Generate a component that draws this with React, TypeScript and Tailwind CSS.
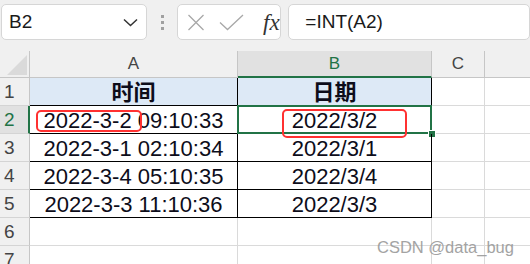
import React from 'react';

interface Row {
  n: number;
  a: string;
  b: string;
}

const rows: Row[] = [
  { n: 1, a: '时间', b: '日期' },
  { n: 2, a: '2022-3-2 09:10:33', b: '2022/3/2' },
  { n: 3, a: '2022-3-1 02:10:34', b: '2022/3/1' },
  { n: 4, a: '2022-3-4 05:10:35', b: '2022/3/4' },
  { n: 5, a: '2022-3-3 11:10:36', b: '2022/3/3' },
  { n: 6, a: '', b: '' },
  { n: 7, a: '', b: '' },
];

const ui = { fontFamily: '"Liberation Sans", "Noto Sans CJK SC", sans-serif' };

const App: React.FC = () => {
  return (
    <div className="relative w-[530px] h-[264px] overflow-hidden bg-white" style={ui}>
      {/* Formula bar */}
      <div className="flex items-start h-[51px] pt-[4px] bg-[#f0f0f0]">
        <div className="ml-[1px] w-[151px] h-[36px] flex items-center justify-between pl-[7px] pr-[8px] bg-white border border-[#d6d6d6] rounded-[5px]">
          <span className="text-[19px] text-[#1a1a1a]">B2</span>
          <svg width="15" height="9" viewBox="0 0 15 9">
            <path d="M1 1.5 L7.5 7.5 L14 1.5" fill="none" stroke="#333" strokeWidth="1.5" />
          </svg>
        </div>
        <div className="w-[31px] h-[36px] flex flex-col items-center justify-center gap-[3px]">
          <span className="w-[3px] h-[3px] bg-[#a0a0a0]" />
          <span className="w-[3px] h-[3px] bg-[#a0a0a0]" />
          <span className="w-[3px] h-[3px] bg-[#a0a0a0]" />
        </div>
        <div className="w-[108px] h-[36px] flex items-center bg-white border border-[#d6d6d6] rounded-[5px]">
          <svg className="ml-[9px]" width="18" height="17" viewBox="0 0 18 17">
            <path d="M1.5 1 L16.5 16 M16.5 1 L1.5 16" stroke="#a8a8a8" strokeWidth="1.3" />
          </svg>
          <svg className="ml-[14px]" width="25" height="17" viewBox="0 0 25 17">
            <path d="M1 8.5 L8.5 15.5 L24 1" fill="none" stroke="#a8a8a8" strokeWidth="1.3" />
          </svg>
          <span
            className="ml-[19px] text-[23px] italic text-[#333] leading-none"
            style={{ fontFamily: '"Liberation Serif", serif' }}
          >
            fx
          </span>
        </div>
        <div className="ml-[7px] w-[250px] h-[36px] flex items-center pl-[16px] bg-white border border-[#d6d6d6] rounded-[5px]">
          <span className="text-[19px] text-[#1a1a1a]">=INT(A2)</span>
        </div>
      </div>

      {/* Sheet */}
      <div className="grid grid-cols-[30px_208px_194px_53px_1fr]">
        {/* column headers */}
        <div className="relative h-[27px] bg-[#f0f0f0] border-r border-b border-[#c6c6c6]">
          <svg className="absolute left-[7px] top-[4px]" width="20" height="20" viewBox="0 0 20 20">
            <path d="M0 20 L20 0 L20 20 Z" fill="#dadada" />
          </svg>
        </div>
        <div className="h-[27px] flex items-center justify-center bg-[#f0f0f0] border-r border-b border-[#c6c6c6] text-[17px] text-[#444]">
          A
        </div>
        <div className="h-[27px] flex items-center justify-center bg-[#e1e1e1] border-r border-[#c6c6c6] border-b-2 border-b-[#217346] text-[17px] text-[#217346]">
          B
        </div>
        <div className="h-[27px] flex items-center justify-center bg-[#f0f0f0] border-r border-b border-[#c6c6c6] text-[17px] text-[#444]">
          C
        </div>
        <div className="h-[27px] bg-[#f0f0f0] border-b border-[#c6c6c6]" />

        {rows.map((r) => {
          const active = r.n === 2;
          const boxed = r.n <= 5;
          const head = r.n === 1;
          return (
            <React.Fragment key={r.n}>
              <div
                className={`h-[28px] flex items-center pl-[4px] pt-[2px] text-[19px] border-b border-[#d4d4d4] ${
                  active
                    ? 'bg-[#e1e1e1] text-[#217346] border-r-2 border-r-[#217346]'
                    : 'bg-[#f0f0f0] text-[#444] border-r border-r-[#c6c6c6]'
                }`}
              >
                {r.n}
              </div>
              <div
                className={`h-[28px] flex items-center justify-center pt-[2px] border-r border-b text-[22px] text-[#0d0d1a] ${
                  boxed ? 'border-black' : 'border-[#dadada]'
                } ${head ? 'bg-[#dde9f6] font-bold text-[21px]' : ''}`}
              >
                {r.a}
              </div>
              <div
                className={`relative h-[28px] flex items-center justify-center pt-[2px] border-r border-b text-[22px] text-[#0d0d1a] ${
                  boxed ? 'border-black' : 'border-[#dadada]'
                } ${head ? 'bg-[#dde9f6] font-bold text-[21px]' : ''}`}
              >
                {r.b}
                {active && (
                  <>
                    <div className="absolute -left-[1px] -top-[1px] -right-[1px] -bottom-[1px] border-2 border-[#217346]" />
                    <div className="absolute -right-[5px] -bottom-[5px] w-[8px] h-[8px] bg-[#217346] border border-white" />
                  </>
                )}
              </div>
              <div className="h-[28px] border-r border-b border-[#dadada]" />
              <div className="h-[28px] border-b border-[#dadada]" />
            </React.Fragment>
          );
        })}
      </div>

      {/* annotations */}
      <div className="absolute left-[36px] top-[110px] w-[106px] h-[22px] rounded-[5px] border-2 border-[#ff3131]" />
      <div className="absolute left-[282px] top-[109px] w-[125px] h-[29px] rounded-[5px] border-2 border-[#ff3131]" />
      <div className="absolute left-[377px] top-[235px] text-[16.5px] text-[#9a9a9a] opacity-90">CSDN @data_bug</div>
    </div>
  );
};

export default App;
